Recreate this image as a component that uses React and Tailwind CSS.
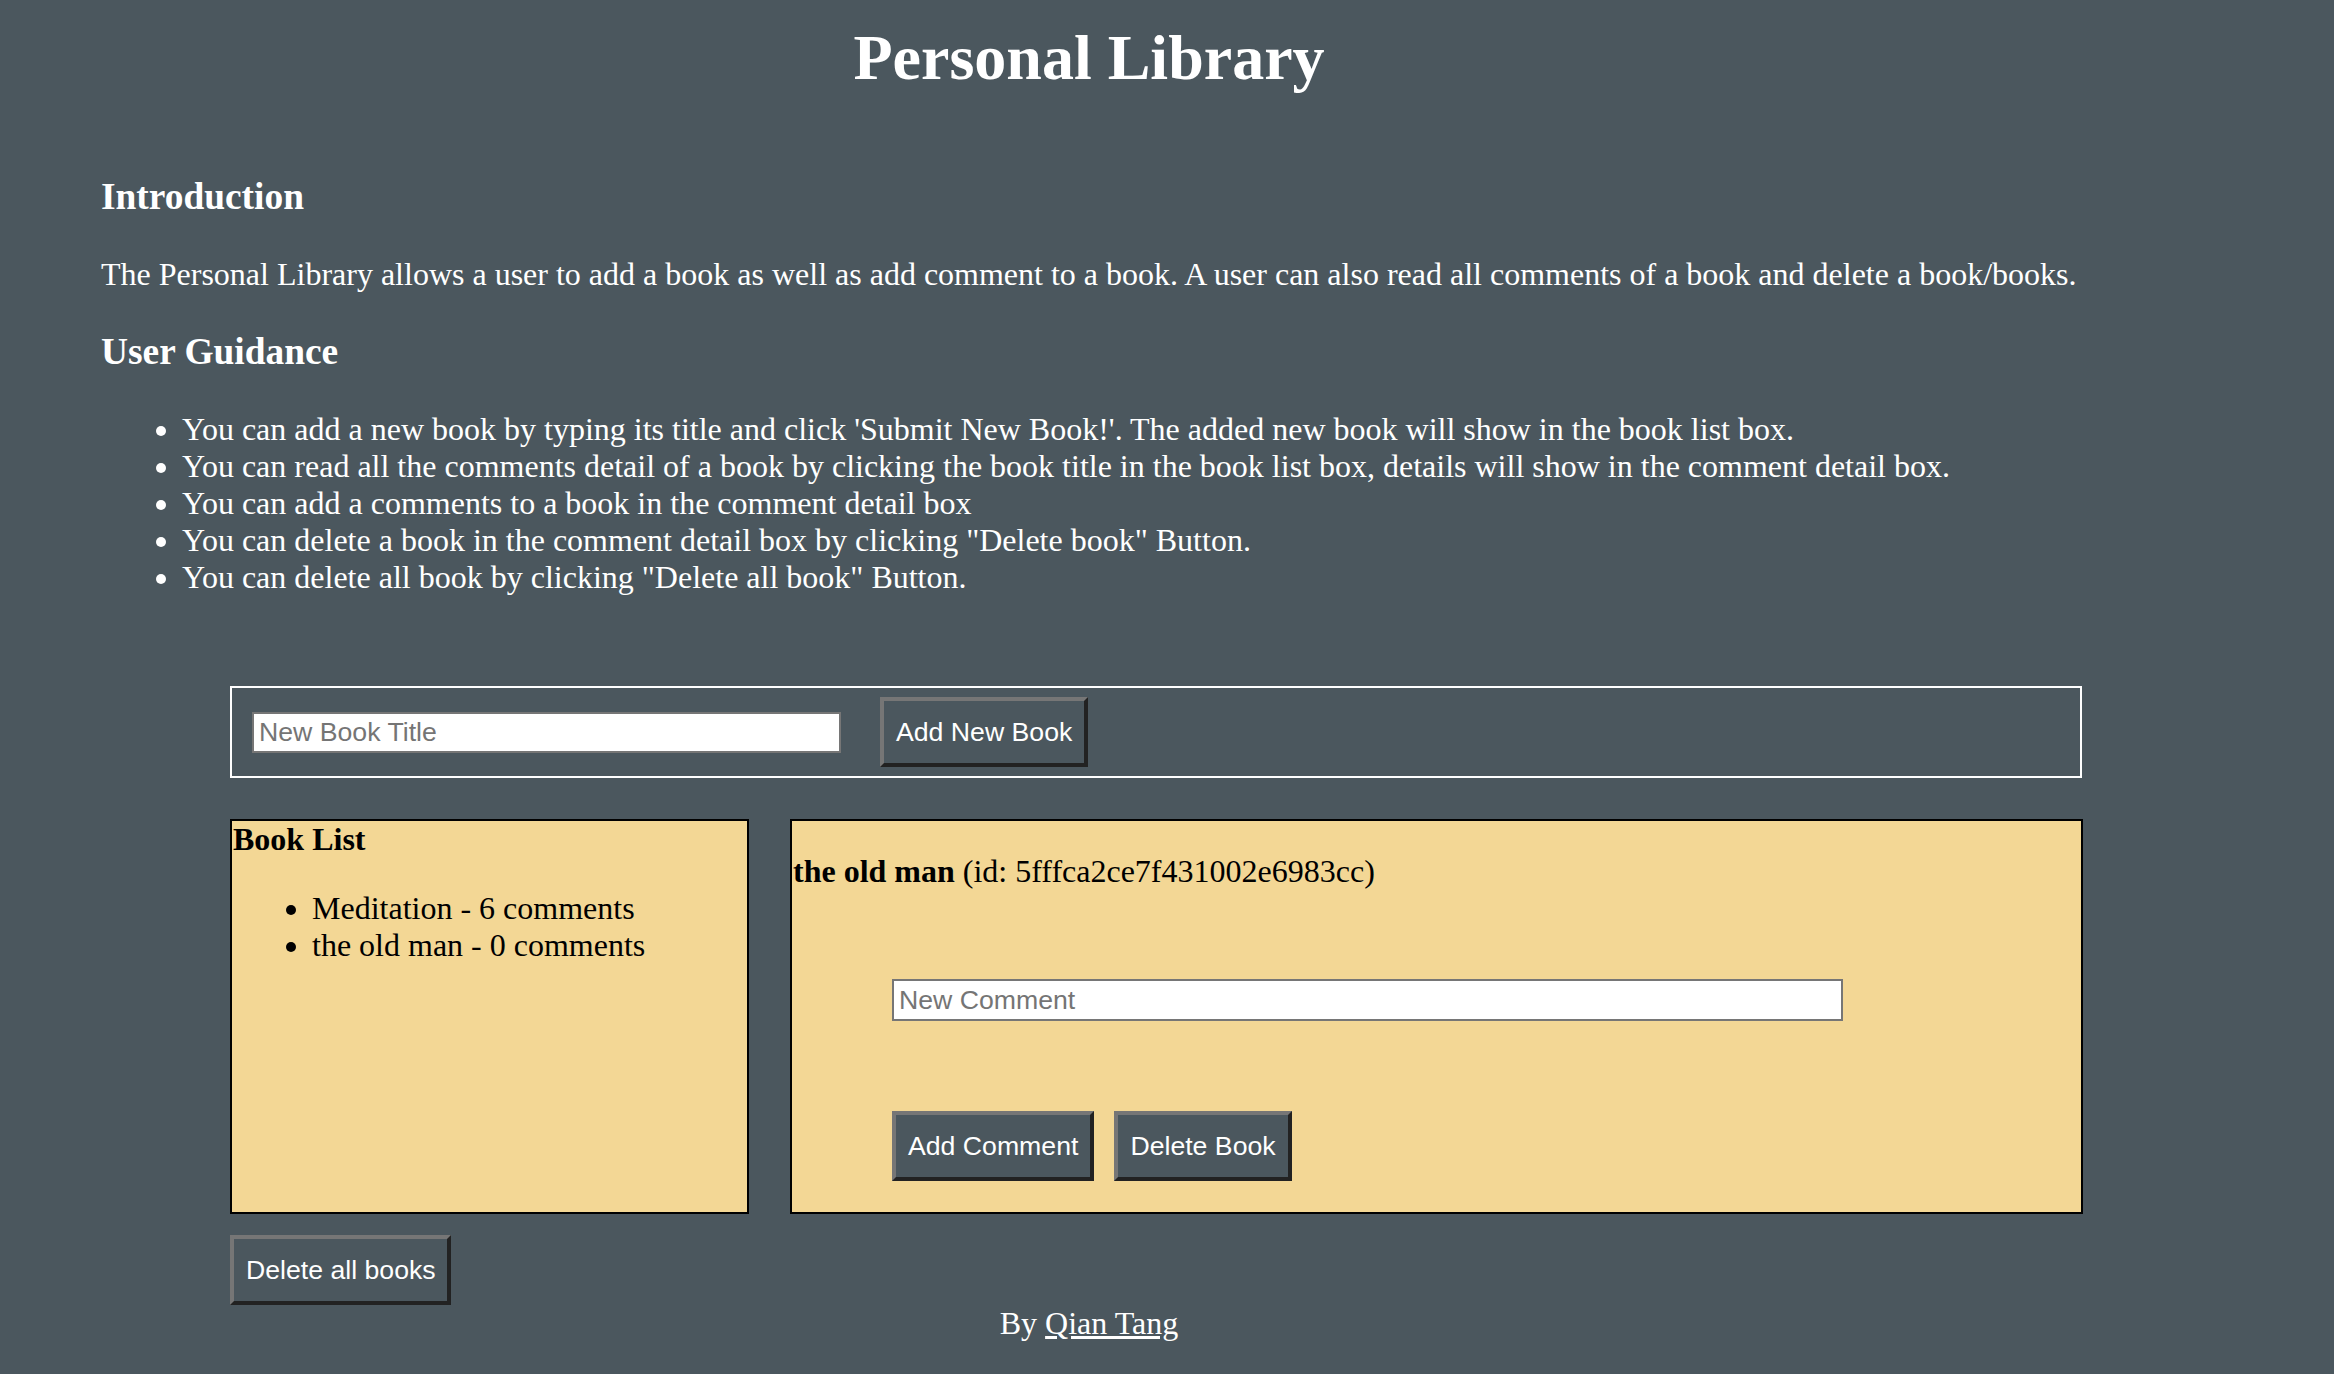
import React from "react";

const books = [
  { title: "Meditation", count: 6 },
  { title: "the old man", count: 0 },
];

const guidance = [
  "You can add a new book by typing its title and click 'Submit New Book!'. The added new book will show in the book list box.",
  "You can read all the comments detail of a book by clicking the book title in the book list box, details will show in the comment detail box.",
  "You can add a comments to a book in the comment detail box",
  'You can delete a book in the comment detail box by clicking "Delete book" Button.',
  'You can delete all book by clicking "Delete all book" Button.',
];

// old-school outset button, same look everywhere on the page
const btn =
  "h-[70px] px-[12px] bg-[#4b575e] text-white text-[26.67px] font-['Liberation_Sans',Arial,sans-serif] border-4 border-t-[#767676] border-l-[#767676] border-b-[#222222] border-r-[#222222] whitespace-nowrap";

const input =
  "bg-white border-2 border-[#767676] pl-[5px] text-[26.67px] text-black font-['Liberation_Sans',Arial,sans-serif] placeholder:text-[#757575] outline-none";

export default function App() {
  return (
    <div className="min-h-screen w-full bg-[#4b575e] text-white text-[32px] leading-[37px] font-['Liberation_Serif','Times_New_Roman',serif]">
      {/* INTRO */}
      <div className="pl-[101px] w-[2077px]">
        <h1 className="pt-[21px] text-center text-[64px] leading-[74px] font-bold">
          Personal Library
        </h1>

        <h3 className="mt-[80px] text-[37.4px] leading-[43px] font-bold">Introduction</h3>
        <p className="mt-[38px] whitespace-nowrap">
          The Personal Library allows a user to add a book as well as add comment to a book. A user can also read all comments of a book and delete a book/books.
        </p>

        <h3 className="mt-[37px] text-[37.4px] leading-[43px] font-bold">User Guidance</h3>
        <ul className="mt-[38px] pl-[81px] list-disc">
          {guidance.map((g) => (
            <li key={g} className="whitespace-nowrap">{g}</li>
          ))}
        </ul>
      </div>

      {/* APP */}
      <div className="pl-[230px] mt-[90px]">
        <form
          onSubmit={(e) => e.preventDefault()}
          className="w-[1852px] h-[92px] border-2 border-white flex items-center"
        >
          <input type="text" placeholder="New Book Title" className={`${input} ml-[20px] w-[589px] h-[41px]`} />
          <button type="submit" className={`${btn} ml-[39px] w-[208px]`}>
            Add New Book
          </button>
        </form>

        <div className="mt-[41px] flex gap-[41px]">
          {/* BOOK LIST */}
          <div className="w-[519px] h-[395px] border-2 border-black bg-[#f3d795] text-black">
            <div className="pl-[1px] font-bold">Book List</div>
            <ul className="mt-[32px] pl-[80px] list-disc">
              {books.map((b) => (
                <li key={b.title}>
                  {b.title} - {b.count} comments
                </li>
              ))}
            </ul>
          </div>

          {/* DETAIL */}
          <div className="w-[1293px] h-[395px] border-2 border-black bg-[#f3d795] text-black">
            <p className="mt-[32px] pl-[1px]">
              <b>the old man</b> (id: 5fffca2ce7f431002e6983cc)
            </p>
            <div className="ml-[100px]">
              <input type="text" placeholder="New Comment" className={`${input} mt-[89px] w-[951px] h-[42px] block`} />
              <div className="mt-[90px] flex gap-[20px]">
                <button className={`${btn} w-[202px]`}>Add Comment</button>
                <button className={`${btn} w-[178px]`}>Delete Book</button>
              </div>
            </div>
          </div>
        </div>

        <button className={`${btn} mt-[21px] w-[221px] block`}>Delete all books</button>
      </div>

      {/* FOOTER */}
      <div className="pl-[101px] w-[2077px] text-center">
        By <a href="#" className="underline text-white">Qian Tang</a>
      </div>
    </div>
  );
}
